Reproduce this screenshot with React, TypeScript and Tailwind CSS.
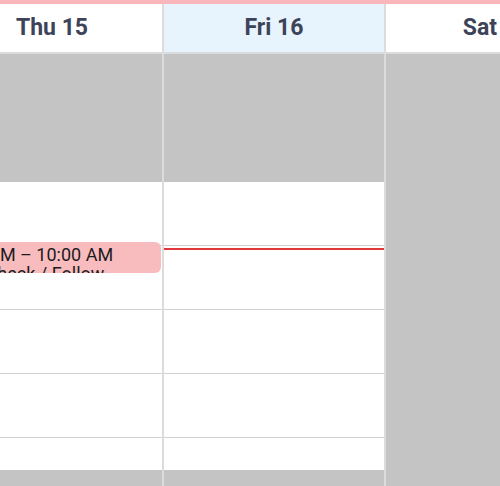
const days = [
  { label: 'Thu 15', today: false, weekend: false },
  { label: 'Fri 16', today: true, weekend: false },
  { label: 'Sat 17', today: false, weekend: true },
]

// 7 hour slots shown, first two and last half are off-hours
const slots = [
  { off: true },
  { off: true },
  { off: false },
  { off: false },
  { off: false },
  { off: false },
  { off: false, half: true },
]

const DayColumn = ({ day, index }: { day: (typeof days)[number]; index: number }) => {
  return (
    <div className="relative flex w-[222px] shrink-0 flex-col border-r-2 border-[#dcdcdc]">
      {slots.map((slot, i) => {
        if (day.weekend) {
          return <div key={i} className="h-[64px] bg-[#c4c4c4]" />
        }
        if (slot.half) {
          return (
            <div key={i} className="flex h-[64px] flex-col">
              <div className="h-[32px] bg-white" />
              <div className="h-[32px] bg-[#c4c4c4]" />
            </div>
          )
        }
        return (
          <div
            key={i}
            className={
              slot.off
                ? 'h-[64px] bg-[#c4c4c4]'
                : 'h-[64px] border-b-[1.5px] border-[#d2d2d2] bg-white'
            }
          />
        )
      })}

      {index === 0 && (
        <div className="absolute left-[2px] right-[1px] top-[188px] h-[31px] overflow-hidden rounded-md bg-[#f8bbbe] pl-[5px] pt-[3px] text-[18px] leading-[19px] text-[#1c1c1c]">
          <div className="whitespace-nowrap">9:00 AM – 10:00 AM</div>
          <div className="whitespace-nowrap">Dog Check / Follow</div>
          <div className="whitespace-nowrap">up</div>
        </div>
      )}

      {day.today && <div className="absolute left-0 right-0 top-[194px] h-[2px] bg-[#e2383c]" />}
    </div>
  )
}

export default function App() {
  return (
    <div className="relative h-[486px] w-[500px] overflow-hidden bg-white font-['Roboto',sans-serif]">
      <div className="h-[4px] bg-[#f9b7bb]" />
      <div className="ml-[-58px] flex">
        {days.map((d) => (
          <div
            key={d.label}
            className={
              'flex h-[50px] w-[222px] shrink-0 items-center justify-center border-b-2 border-r-2 border-[#dcdcdc] ' +
              (d.today ? 'bg-[#e8f4fd]' : 'bg-white')
            }
          >
            <span className="text-[23px] font-bold text-[#3d4358]">{d.label}</span>
          </div>
        ))}
      </div>
      <div className="ml-[-58px] flex">
        {days.map((d, i) => (
          <DayColumn key={d.label} day={d} index={i} />
        ))}
      </div>
    </div>
  )
}
